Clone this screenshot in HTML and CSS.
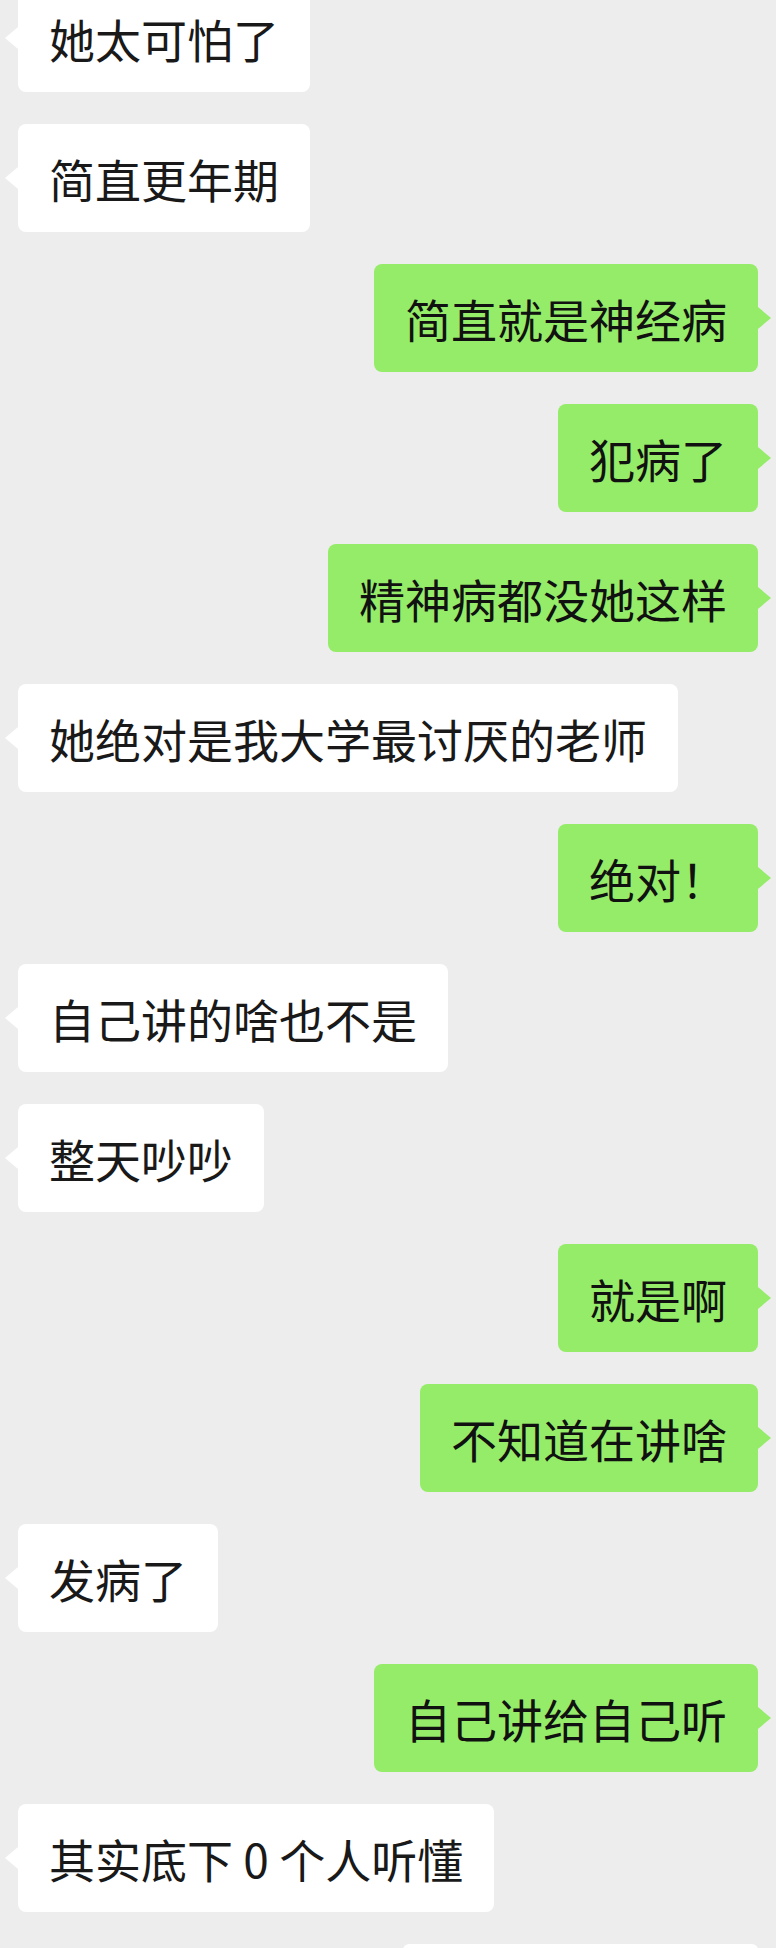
FILE: index.html
```html
<!DOCTYPE html>
<html lang="zh-CN">
<head>
  <meta charset="UTF-8" />
  <meta name="viewport" content="width=device-width, initial-scale=1.0"/>
  <title>聊天记录</title>
  <link rel="stylesheet" href="styles.css">
</head>
<body>

  <main class="chat">
    <div class="msg left"><div class="bubble">她太可怕了</div></div>
    <div class="msg left"><div class="bubble">简直更年期</div></div>
    <div class="msg right"><div class="bubble">简直就是神经病</div></div>
    <div class="msg right"><div class="bubble">犯病了</div></div>
    <div class="msg right"><div class="bubble">精神病都没她这样</div></div>
    <div class="msg left"><div class="bubble">她绝对是我大学最讨厌的老师</div></div>
    <div class="msg right"><div class="bubble">绝对！</div></div>
    <div class="msg left"><div class="bubble">自己讲的啥也不是</div></div>
    <div class="msg left"><div class="bubble">整天吵吵</div></div>
    <div class="msg right"><div class="bubble">就是啊</div></div>
    <div class="msg right"><div class="bubble">不知道在讲啥</div></div>
    <div class="msg left"><div class="bubble">发病了</div></div>
    <div class="msg right"><div class="bubble">自己讲给自己听</div></div>
    <div class="msg left"><div class="bubble">其实底下 0 个人听懂</div></div>
    <div class="msg right"><div class="card"></div></div>
  </main>

</body>
</html>
```

FILE: styles.css
```css
html, body {
  height: 100%;
}

body {
  margin: 0;
  background: #ededed;
  font-family: "Noto Sans CJK SC", "Noto Sans", sans-serif;
  color: #191919;
  overflow: hidden;
}

.chat {
  display: flex;
  flex-direction: column;
  gap: 32px;
  margin-top: -16px;
  padding: 0 18px;
}

.msg {
  display: flex;
}

.msg.right {
  justify-content: flex-end;
}

.bubble {
  position: relative;
  height: 108px;
  box-sizing: border-box;
  padding: 0 31px;
  display: flex;
  align-items: center;
  font-size: 46px;
  line-height: 1;
  border-radius: 8px;
  background: #fff;
  white-space: nowrap;
}

.right .bubble {
  background: #95ec69;
  color: #111;
}

/* little tails on the side of each bubble */
.bubble::before {
  content: "";
  position: absolute;
  top: 50%;
  margin-top: -11px;
  border-top: 11px solid transparent;
  border-bottom: 11px solid transparent;
}

.left .bubble::before {
  left: -13px;
  border-right: 13px solid #fff;
}

.right .bubble::before {
  right: -13px;
  border-left: 13px solid #95ec69;
}

.card {
  width: 355px;
  height: 120px;
  background: #fff;
  border-radius: 6px;
}
```
